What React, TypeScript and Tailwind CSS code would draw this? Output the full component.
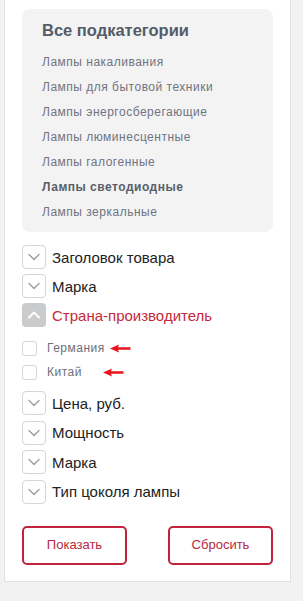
import React from 'react';

const subcategories = [
  { name: 'Лампы накаливания' },
  { name: 'Лампы для бытовой техники' },
  { name: 'Лампы энергосберегающие' },
  { name: 'Лампы люминесцентные' },
  { name: 'Лампы галогенные' },
  { name: 'Лампы светодиодные', active: true },
  { name: 'Лампы зеркальные' },
];

const Chevron: React.FC<{ up?: boolean }> = ({ up }) => (
  <svg width="12" height="8" viewBox="0 0 12 8" fill="none">
    <path
      d={up ? 'M1 6.5L6 1.5L11 6.5' : 'M1 1.5L6 6.5L11 1.5'}
      stroke={up ? '#ffffff' : '#9a9ea6'}
      strokeWidth={up ? 2 : 1.4}
      strokeLinecap="round"
      strokeLinejoin="round"
    />
  </svg>
);

const FilterRow: React.FC<{ title: string; open?: boolean }> = ({ title, open }) => (
  <div className="flex items-center h-[24px] gap-[6px]">
    <div
      className={`w-[24px] h-[24px] rounded-[4px] flex items-center justify-center ${
        open ? 'bg-[#cacbcd]' : 'border border-[#d4d5d8] bg-white'
      }`}
    >
      <Chevron up={open} />
    </div>
    <span className={`text-[15px] leading-none ${open ? 'text-[#c22a3c]' : 'text-[#222]'}`}>{title}</span>
  </div>
);

// red annotation arrow pointing left
const Arrow: React.FC = () => (
  <svg width="21" height="9" viewBox="0 0 21 9">
    <path d="M0 4.5L9 0.5L8 3.3H20.5V5.7H8L9 8.5Z" fill="#e8141c" />
  </svg>
);

const CheckItem: React.FC<{ label: string; arrowGap: number }> = ({ label, arrowGap }) => (
  <div className="flex items-center h-[16px]">
    <div className="w-[15px] h-[15px] rounded-[3px] border border-[#d4d5d8] bg-white" />
    <span className="ml-[10px] text-[12px] tracking-[0.5px] text-[#6b6f7a] leading-none">{label}</span>
    <span style={{ marginLeft: arrowGap }} className="flex">
      <Arrow />
    </span>
  </div>
);

const App: React.FC = () => {
  return (
    <div className="w-[303px] h-[601px] bg-[#f2f2f2] overflow-hidden" style={{ fontFamily: '"Liberation Sans", Arial, sans-serif' }}>
      <div className="ml-[4px] w-[287px] bg-white border border-t-0 border-[#e2e2e2] pt-[9px] pb-[16px]">
        <div className="ml-[17px] w-[251px] h-[223px] bg-[#f3f3f4] rounded-[8px] pl-[20px] pt-[11px]">
          <h2 className="text-[16.5px] font-bold text-[#535c68] leading-[20px]">Все подкатегории</h2>
          <ul className="mt-[10px]">
            {subcategories.map(item => (
              <li
                key={item.name}
                className={`text-[12px] leading-[25px] tracking-[0.5px] ${
                  item.active ? 'font-bold text-[#5a5e68]' : 'text-[#707480]'
                }`}
              >
                {item.name}
              </li>
            ))}
          </ul>
        </div>

        <div className="ml-[17px] mt-[13px] flex flex-col gap-[5px]">
          <FilterRow title="Заголовок товара" />
          <FilterRow title="Марка" />
          <FilterRow title="Страна-производитель" open />
        </div>

        <div className="ml-[17px] mt-[13px] flex flex-col gap-[8px]">
          <CheckItem label="Германия" arrowGap={5} />
          <CheckItem label="Китай" arrowGap={21} />
        </div>

        <div className="ml-[17px] mt-[11px] flex flex-col gap-[5.5px]">
          <FilterRow title="Цена, руб." />
          <FilterRow title="Мощность" />
          <FilterRow title="Марка" />
          <FilterRow title="Тип цоколя лампы" />
        </div>

        <div className="ml-[17px] w-[251px] mt-[22px] flex justify-between">
          <button className="w-[105px] h-[39px] rounded-[5px] border-2 border-[#c0233b] text-[13px] text-[#b8283d] bg-white">
            Показать
          </button>
          <button className="w-[105px] h-[39px] rounded-[5px] border-2 border-[#c0233b] text-[13px] text-[#b8283d] bg-white">
            Сбросить
          </button>
        </div>
      </div>
    </div>
  );
};

export default App;
